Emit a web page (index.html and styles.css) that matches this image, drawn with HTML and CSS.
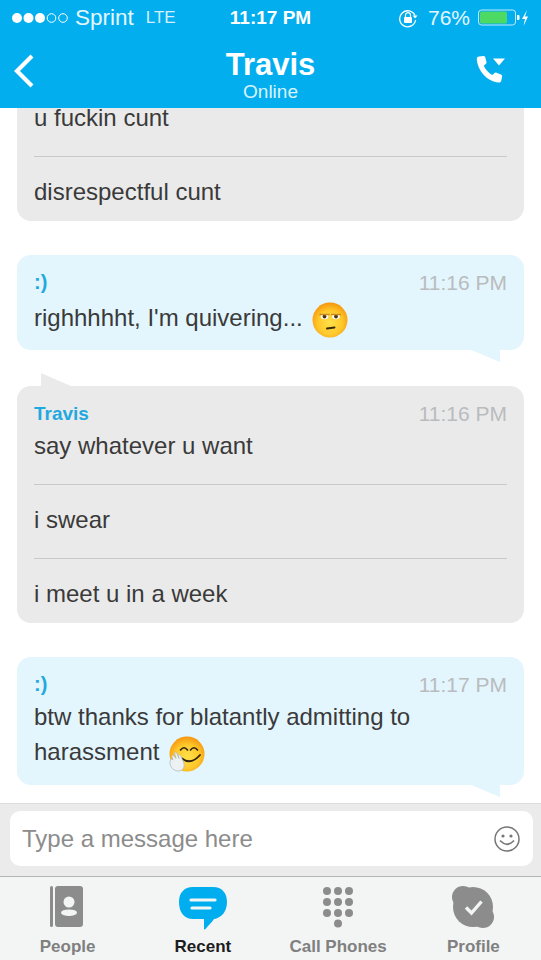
FILE: index.html
```html
<!DOCTYPE html>
<html lang="en">
<head>
    <meta charset="UTF-8">
    <meta name="viewport" content="width=device-width, initial-scale=1.0">
    <title>Travis</title>
    <link rel="stylesheet" href="styles.css">
</head>
<body>
<svg class="defs" width="0" height="0">
    <defs>
        <radialGradient id="face" cx="50%" cy="58%" r="58%">
            <stop offset="0" stop-color="#ffe04a"/>
            <stop offset="0.6" stop-color="#ffc82a"/>
            <stop offset="1" stop-color="#f5960f"/>
        </radialGradient>
    </defs>
</svg>
<div class="page">
    <header class="header">
        <div class="status">
            <div class="status-left">
                <svg class="signal" width="58" height="12" viewBox="0 0 58 12">
                    <circle cx="6" cy="6" r="5" fill="#fff"/>
                    <circle cx="17.5" cy="6" r="5" fill="#fff"/>
                    <circle cx="29" cy="6" r="5" fill="#fff"/>
                    <circle cx="40.5" cy="6" r="4.3" fill="none" stroke="#fff"/>
                    <circle cx="52" cy="6" r="4.3" fill="none" stroke="#fff"/>
                </svg>
                <span class="carrier">Sprint</span>
                <span class="network">LTE</span>
            </div>
            <div class="clock">11:17 PM</div>
            <div class="status-right">
                <svg class="lock" width="20" height="20" viewBox="0 0 20 20">
                    <path d="M17 7.5A8 8 0 1 0 17.6 12" fill="none" stroke="#fff" stroke-width="1.3"/>
                    <path d="M14.6 7.4L19.6 7.4L17.1 10.6Z" fill="#fff"/>
                    <rect x="6" y="9" width="8" height="6" rx="1" fill="#fff"/>
                    <path d="M7.5 9V7.2a2.5 2.5 0 0 1 5 0V9" fill="none" stroke="#fff" stroke-width="1.2"/>
                </svg>
                <span class="percent">76%</span>
                <svg width="50" height="18" viewBox="0 0 50 18">
                    <rect x="0.5" y="1" width="37" height="15" rx="3" fill="none" stroke="#bfe9fa"/>
                    <rect x="2" y="2.5" width="27" height="12" rx="1.5" fill="#4cd964"/>
                    <path d="M39 6h1.5a1 1 0 0 1 1 1v3a1 1 0 0 1-1 1H39z" fill="#fff"/>
                    <path d="M49 1L44 10H47L45.5 17L50 7.5H47Z" fill="#fff"/>
                </svg>
            </div>
        </div>
        <div class="titlebar">
            <svg class="back" width="24" height="36" viewBox="0 0 24 36">
                <path d="M20 3L5 18L20 33" fill="none" stroke="#fff" stroke-width="4.2"/>
            </svg>
            <div class="title">
                <div class="title-name">Travis</div>
                <div class="title-sub">Online</div>
            </div>
            <svg class="call" width="32" height="30" viewBox="0 0 32 30">
                <path d="M4 1.5L8.5 1C9.5 1 10 1.500 10.300 2.500L11.500 7C11.700 8 11.300 8.600 10.500 9.200L8.800 10.500C10 14 13.500 18 17.500 20L19.200 18.300C20 17.500 20.700 17.300 21.500 17.700L26 19.500C27 20 27.300 20.600 27.100 21.600L26.300 25.700C26 27 25 27.600 23.800 27.500C12 26.500 2.500 15.500 1.800 4C1.700 2.600 2.600 1.700 4 1.500Z" fill="#fff"/>
                <path d="M18 3.500H30L24 10.500Z" fill="#fff"/>
            </svg>
        </div>
    </header>

    <main class="chat">
        <section class="msg msg-them">
            <div class="row">u fuckin cunt</div>
            <div class="row">disrespectful cunt</div>
        </section>

        <section class="msg msg-me">
            <div class="meta"><span class="sender">:)</span><span class="time">11:16 PM</span></div>
            <div class="row row-emoji">righhhhht, I'm quivering...
                <svg class="emoji" width="36" height="36" viewBox="0 0 36 36">
                    <circle cx="18" cy="18" r="17.500" fill="url(#face)"/>
                    <ellipse cx="12.500" cy="14.500" rx="3.800" ry="2.800" fill="#fff"/>
                    <ellipse cx="24" cy="14.500" rx="3.800" ry="2.800" fill="#fff"/>
                    <circle cx="12.500" cy="14.500" r="1.900" fill="#4a3414"/>
                    <circle cx="24" cy="14.500" r="1.900" fill="#4a3414"/>
                    <path d="M7.500 12.500H17.500M19 12.500H29" stroke="#c98a1c" stroke-width="1.600"/>
                    <path d="M15 26.500L22.500 25.500" fill="none" stroke="#3a2a10" stroke-width="2" stroke-linecap="round"/>
                </svg>
            </div>
        </section>

        <section class="msg msg-them">
            <div class="meta"><span class="sender sender-name">Travis</span><span class="time">11:16 PM</span></div>
            <div class="row">say whatever u want</div>
            <div class="row">i swear</div>
            <div class="row">i meet u in a week</div>
        </section>

        <section class="msg msg-me msg-long">
            <div class="meta"><span class="sender">:)</span><span class="time">11:17 PM</span></div>
            <div class="row">btw thanks for blatantly admitting to<br>harassment
                <svg class="emoji" width="36" height="36" viewBox="0 0 36 36">
                    <circle cx="18" cy="18" r="17.500" fill="url(#face)"/>
                    <path d="M11.500 14Q15 9.500 18.500 14M21.500 14Q25 9.500 28.500 14" fill="none" stroke="#2e2210" stroke-width="1.600" stroke-linecap="round"/>
                    <path d="M13 22.500Q22 29.500 31 19" fill="none" stroke="#2e2210" stroke-width="1.800" stroke-linecap="round"/>
                    <path d="M1 26C0.500 31 5 35.500 10 35C15 34.500 16 29.500 14.500 26L11.500 19.500C10.500 18 9 19 9.500 20.500L10 22.500L7.500 16.500C6.500 15.500 5.300 16.500 5.800 17.700L7 22.500L4.500 19.500C3.500 19 2.500 20 3 21L4 24L2.500 23C1.500 23 1 24.500 1 26Z" fill="#eef1f2" stroke="#a8b4bb" stroke-width="0.700"/>
                </svg>
            </div>
        </section>
    </main>

    <div class="composer">
        <div class="input">
            <span class="placeholder">Type a message here</span>
            <svg width="28" height="28" viewBox="0 0 28 28">
                <circle cx="14" cy="14" r="12" fill="none" stroke="#777" stroke-width="1.500"/>
                <circle cx="10" cy="11" r="1.600" fill="#777"/>
                <circle cx="18" cy="11" r="1.600" fill="#777"/>
                <path d="M7.500 16Q14 22.500 20.500 16" fill="none" stroke="#777" stroke-width="1.700" stroke-linecap="round"/>
            </svg>
        </div>
    </div>

    <nav class="tabs">
        <div class="tab">
            <div class="tab-icon">
                <svg width="44" height="42" viewBox="0 0 44 42">
                    <rect x="4" y="0" width="3" height="41" rx="1.500" fill="#8c8c8c"/>
                    <rect x="9" y="0" width="28" height="41" rx="3" fill="#8c8c8c"/>
                    <circle cx="23" cy="16" r="5.500" fill="#f3f5f5"/>
                    <ellipse cx="23" cy="26.700" rx="8" ry="3.300" fill="#f3f5f5"/>
                </svg>
            </div>
            <span class="tab-label">People</span>
        </div>
        <div class="tab tab-active">
            <div class="tab-icon">
                <svg width="50" height="44" viewBox="0 0 50 44">
                    <path d="M15 1H35C44 1 49 7 49 16C49 26 43 32 36 33C34 36 30 40 27.500 43C26.500 44 26 43.500 26 42.500V33H15C6 33 1 26 1 16C1 7 6 1 15 1Z" fill="#00aeef"/>
                    <path d="M13 14H37M14 22H32" stroke="#f3f5f5" stroke-width="3.200" stroke-linecap="round"/>
                </svg>
            </div>
            <span class="tab-label">Recent</span>
        </div>
        <div class="tab">
            <div class="tab-icon">
                <svg width="34" height="42" viewBox="0 0 34 42">
                    <g fill="#8c8c8c">
                        <circle cx="6" cy="5" r="4"/><circle cx="17" cy="5" r="4"/><circle cx="28" cy="5" r="4"/>
                        <circle cx="6" cy="16" r="4"/><circle cx="17" cy="16" r="4"/><circle cx="28" cy="16" r="4"/>
                        <circle cx="6" cy="27" r="4"/><circle cx="17" cy="27" r="4"/><circle cx="28" cy="27" r="4"/>
                        <circle cx="17" cy="37.500" r="4"/>
                    </g>
                </svg>
            </div>
            <span class="tab-label">Call Phones</span>
        </div>
        <div class="tab">
            <div class="tab-icon">
                <svg width="44" height="42" viewBox="0 0 44 42">
                    <g fill="#8c8c8c">
                        <circle cx="22" cy="21" r="20"/>
                        <circle cx="12" cy="11" r="11"/>
                        <circle cx="32" cy="31" r="11"/>
                    </g>
                    <path d="M15 21.500L20.500 27L30.500 15.500" fill="none" stroke="#f3f5f5" stroke-width="3.400"/>
                </svg>
            </div>
            <span class="tab-label">Profile</span>
        </div>
    </nav>
</div>
</body>
</html>
```

FILE: styles.css
```css
* {
    box-sizing: border-box;
}

body {
    margin: 0;
    font-family: 'Liberation Sans', Arial, sans-serif;
    background-color: #fff;
}

.defs {
    display: block;
    height: 0;
}

.page {
    display: flex;
    flex-direction: column;
    width: 541px;
    height: 960px;
    overflow: hidden;
}

/* header */
.header {
    flex: none;
    height: 108px;
    background-color: #03aeef;
    color: #fff;
}

.status {
    display: grid;
    grid-template-columns: 1fr auto 1fr;
    align-items: center;
    height: 36px;
    padding: 0 11px;
}

.status-left {
    display: flex;
    align-items: center;
}

.carrier {
    margin-left: 6px;
    font-size: 22.500px;
    color: #e3f6fe;
}

.network {
    margin-left: 12px;
    font-size: 17px;
    color: #d3f0fc;
}

.clock {
    font-size: 19px;
    font-weight: bold;
}

.status-right {
    display: flex;
    align-items: center;
    justify-content: flex-end;
    gap: 11px;
    margin-right: 2px;
}

.lock {
    margin-right: -1px;
}

.percent {
    margin-right: -3px;
    font-size: 21px;
    color: #e3f6fe;
}

.titlebar {
    display: grid;
    grid-template-columns: 1fr auto 1fr;
    align-items: center;
    height: 72px;
    padding: 0 12px;
}

.back {
    margin-top: -2px;
}

.title {
    text-align: center;
}

.title-name {
    font-size: 31px;
    font-weight: bold;
    line-height: 34px;
    margin-top: 6px;
}

.title-sub {
    font-size: 19px;
    line-height: 20px;
    color: #d9f3fd;
}

.call {
    justify-self: end;
    margin-top: -5px;
    margin-right: 22px;
}

/* messages */
.chat {
    flex: 1;
    display: flex;
    flex-direction: column;
    justify-content: flex-end;
    gap: 34px;
    padding-bottom: 18px;
    overflow: hidden;
}

.msg {
    position: relative;
    flex: none;
    margin: 0 17px;
    padding: 13px 17px;
    border-radius: 14px;
    font-size: 24px;
    line-height: 35px;
    color: #3a3a3a;
}

.msg-them {
    padding-bottom: 12px;
    background-color: #eaeaea;
}

.msg-me {
    padding-bottom: 11px;
    background-color: #e3f5fd;
}

.msg-long {
    padding-bottom: 16px;
}

.msg-me + .msg-them {
    margin-top: 2px;
}

.msg-me::after {
    content: "";
    position: absolute;
    right: 24px;
    bottom: -12px;
    width: 29px;
    height: 12px;
    background-color: #e3f5fd;
    clip-path: polygon(0 0, 100% 0, 100% 100%);
}

.msg-them:nth-child(3)::before {
    content: "";
    position: absolute;
    left: 24px;
    top: -13px;
    width: 30px;
    height: 13px;
    background-color: #eaeaea;
    clip-path: polygon(0 0, 100% 100%, 0 100%);
}

.meta {
    display: flex;
    justify-content: space-between;
    align-items: center;
    height: 29px;
    line-height: 29px;
}

.sender {
    font-size: 20px;
    font-weight: bold;
    color: #1fa9e0;
}

.sender-name {
    font-size: 19px;
}

.time {
    font-size: 21px;
    color: #b9bcbe;
}

.row + .row {
    margin-top: 21px;
    padding-top: 17px;
    border-top: 1px solid #c9c9c9;
}

.row-emoji {
    line-height: 42px;
}

.emoji {
    margin: -8px 0 -8px 3px;
    vertical-align: middle;
}

/* input */
.composer {
    flex: none;
    height: 73px;
    padding: 7px 8px 10px 10px;
    background-color: #ebebeb;
    border-top: 1px solid #dcdcdc;
}

.input {
    display: flex;
    align-items: center;
    justify-content: space-between;
    height: 55px;
    padding: 0 12px;
    background-color: #fff;
    border-radius: 10px;
}

.placeholder {
    font-size: 24px;
    color: #8c8c8c;
}

/* bottom tabs */
.tabs {
    flex: none;
    display: grid;
    grid-template-columns: repeat(4, 1fr);
    height: 84px;
    background-color: #f3f5f5;
    border-top: 1px solid #b4b6b6;
}

.tab {
    display: flex;
    flex-direction: column;
    align-items: center;
    padding-top: 9px;
}

.tab-icon {
    height: 51px;
}

.tab-label {
    font-size: 17px;
    font-weight: bold;
    line-height: 20px;
    color: #808080;
}

.tab-active .tab-label {
    color: #1d1d1d;
}
```
